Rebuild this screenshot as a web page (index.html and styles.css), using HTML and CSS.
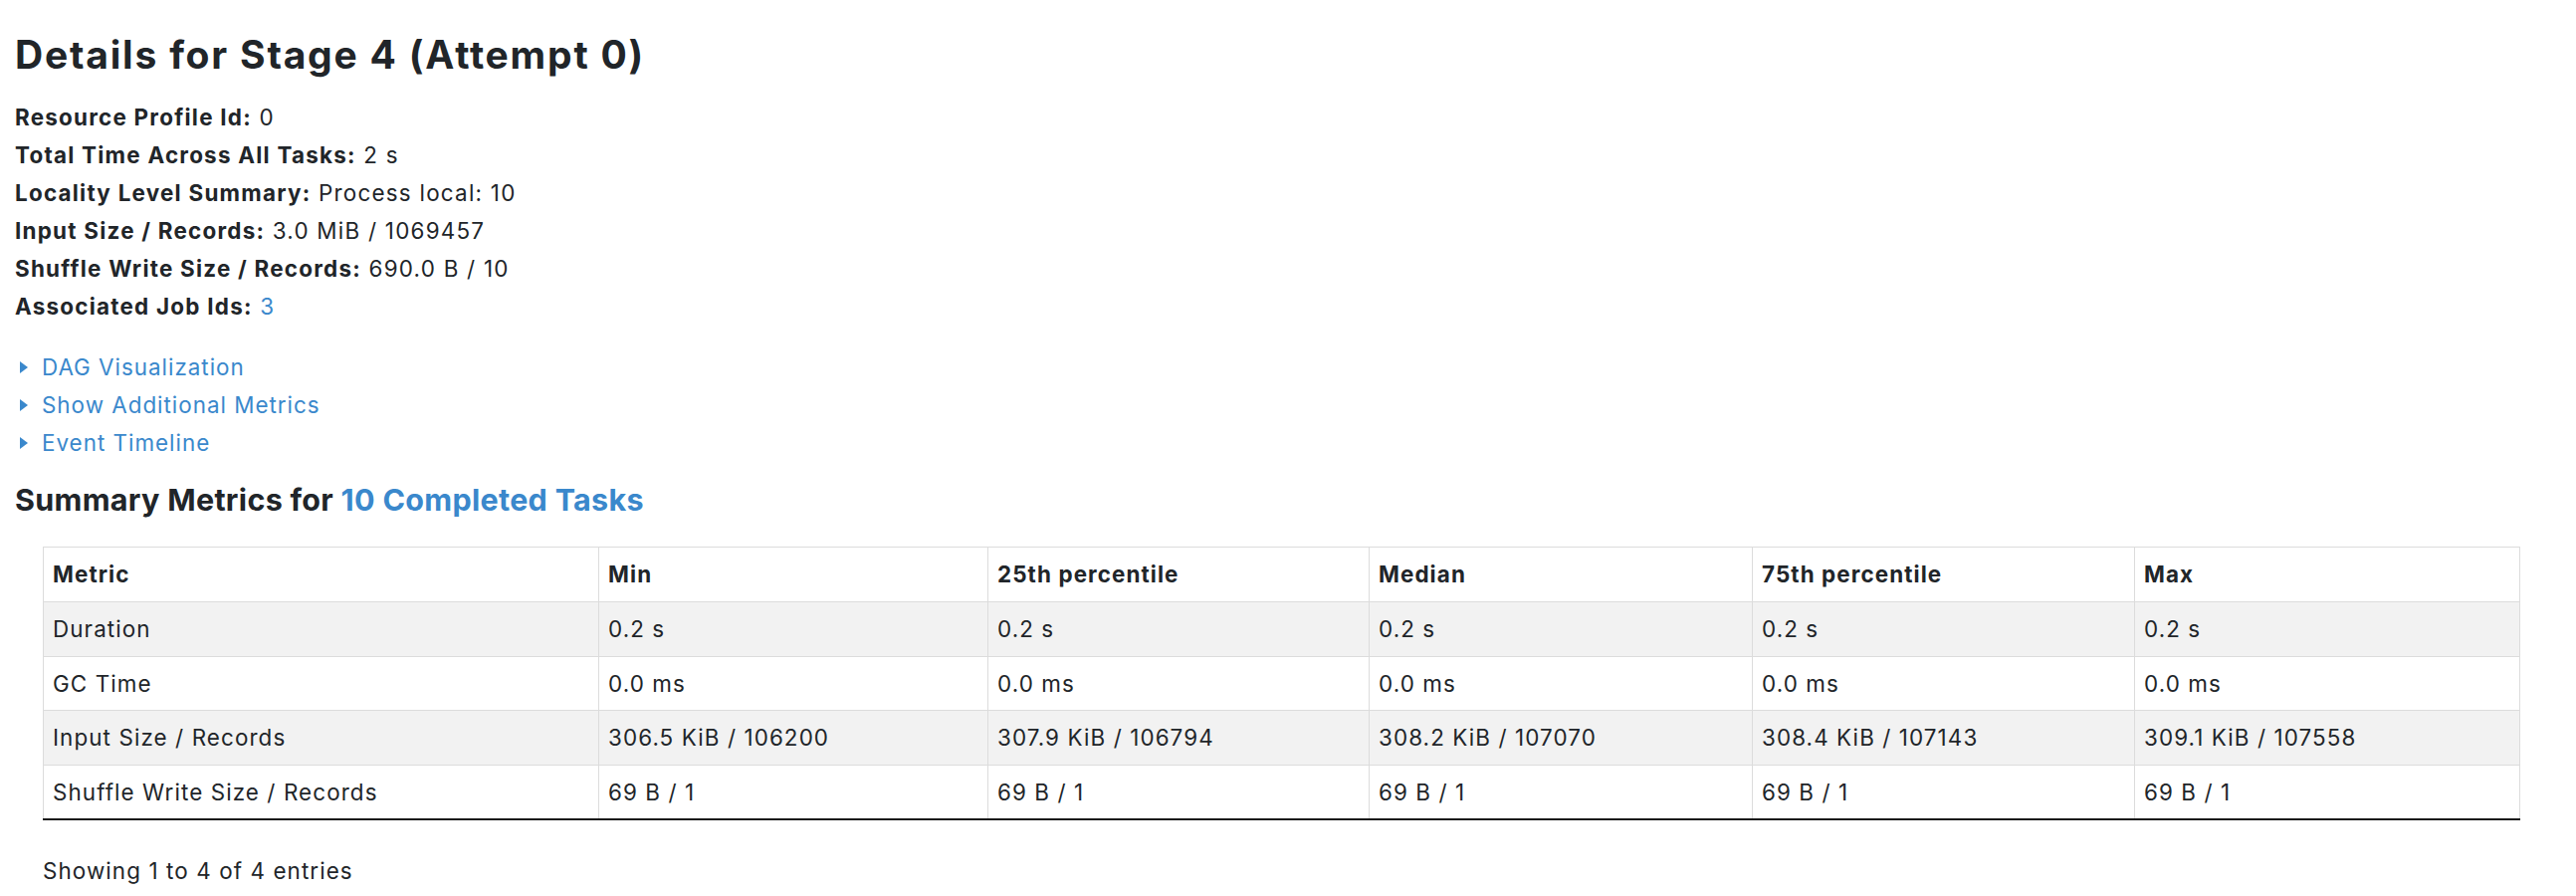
FILE: index.html
```html
<!DOCTYPE html>
<html>
<head>
<meta charset="utf-8">
<title>Stage 4</title>
<link rel="stylesheet" href="styles.css">
</head>
<body>
<div class="page">
  <h3 class="title">Details for Stage 4 (Attempt 0)</h3>
  <ul class="facts">
    <li><strong>Resource Profile Id:</strong> 0</li>
    <li><strong>Total Time Across All Tasks:</strong> 2 s</li>
    <li><strong>Locality Level Summary:</strong> Process local: 10</li>
    <li><strong>Input Size / Records:</strong> 3.0 MiB / 1069457</li>
    <li><strong>Shuffle Write Size / Records:</strong> 690.0 B / 10</li>
    <li><strong>Associated Job Ids:</strong> <a href="#" class="link">3</a></li>
  </ul>
  <ul class="toggles">
    <li><span class="arrow"></span><a href="#" class="link">DAG Visualization</a></li>
    <li><span class="arrow"></span><a href="#" class="link">Show Additional Metrics</a></li>
    <li><span class="arrow"></span><a href="#" class="link">Event Timeline</a></li>
  </ul>
  <h4 class="summary">Summary Metrics for <a href="#" class="link">10 Completed Tasks</a></h4>
  <div class="table-wrap">
    <table class="metrics">
      <colgroup>
        <col class="c1">
        <col class="c2">
        <col class="c3">
        <col class="c4">
        <col class="c5">
        <col class="c6">
      </colgroup>
      <thead>
        <tr><th>Metric</th><th>Min</th><th>25th percentile</th><th>Median</th><th>75th percentile</th><th>Max</th></tr>
      </thead>
      <tbody>
        <tr class="odd"><td>Duration</td><td>0.2 s</td><td>0.2 s</td><td>0.2 s</td><td>0.2 s</td><td>0.2 s</td></tr>
        <tr><td>GC Time</td><td>0.0 ms</td><td>0.0 ms</td><td>0.0 ms</td><td>0.0 ms</td><td>0.0 ms</td></tr>
        <tr class="odd"><td>Input Size / Records</td><td>306.5 KiB / 106200</td><td>307.9 KiB / 106794</td><td>308.2 KiB / 107070</td><td>308.4 KiB / 107143</td><td>309.1 KiB / 107558</td></tr>
        <tr><td>Shuffle Write Size / Records</td><td>69 B / 1</td><td>69 B / 1</td><td>69 B / 1</td><td>69 B / 1</td><td>69 B / 1</td></tr>
      </tbody>
    </table>
    <div class="info">Showing 1 to 4 of 4 entries</div>
  </div>
</div>
</body>
</html>
```

FILE: styles.css
```css
html, body {
  margin: 0;
  padding: 0;
  background: #ffffff;
}

body {
  font-family: Inter, "Noto Sans", sans-serif;
  font-size: 22.4px;
  line-height: 1.5;
  letter-spacing: 1.25px;
  color: #212529;
}

.page {
  padding: 0 56px 0 15px;
}

.title {
  font-size: 39px;
  font-weight: 700;
  line-height: 1.2;
  margin: 0;
  padding-top: 32px;
  letter-spacing: 1.8px;
}

.facts {
  list-style: none;
  margin: 20px 0 0 0;
  padding: 0;
}

.facts li {
  line-height: 38px;
}

.facts strong {
  font-weight: 700;
}

.link {
  color: #3a88cc;
  text-decoration: none;
}

.toggles {
  list-style: none;
  margin: 23px 0 0 0;
  padding: 0;
}

.toggles li {
  line-height: 38px;
  display: flex;
  align-items: center;
  letter-spacing: 1px;
}

.arrow {
  width: 0;
  height: 0;
  border-top: 6px solid transparent;
  border-bottom: 6px solid transparent;
  border-left: 8px solid #3a88cc;
  margin-left: 5px;
  margin-right: 14px;
}

.summary {
  font-size: 30.5px;
  font-weight: 700;
  line-height: 1.2;
  margin: 20px 0 0 0;
  letter-spacing: 0.3px;
}

.table-wrap {
  margin: 29px 0 0 28px;
}

.metrics {
  width: 100%;
  border-collapse: collapse;
  table-layout: fixed;
  letter-spacing: 1.1px;
}

.c1 { width: 558px; }
.c2 { width: 391px; }
.c3 { width: 383px; }
.c4 { width: 385px; }
.c5 { width: 384px; }

.metrics th,
.metrics td {
  border: 1px solid #dcdcdc;
  padding: 10px 9px;
  text-align: left;
  vertical-align: top;
  line-height: 33.6px;
  white-space: nowrap;
}

.metrics th {
  font-weight: 700;
}

.metrics tbody tr:last-child td {
  border-bottom: 2px solid #1a1a1a;
}

.metrics tr.odd td {
  background: #f2f2f2;
}

.info {
  padding-top: 34px;
  line-height: 33.6px;
  letter-spacing: 1.1px;
}
```
